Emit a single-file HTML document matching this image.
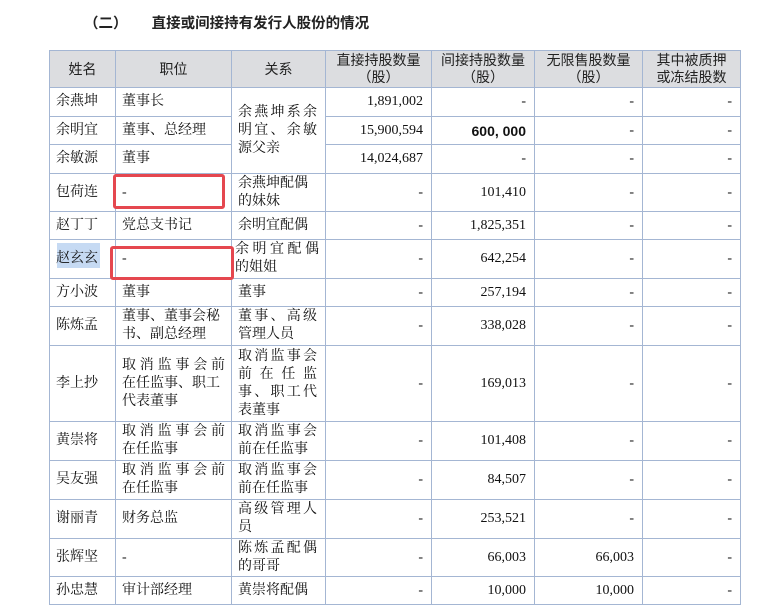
<!DOCTYPE html>
<html><head><meta charset="utf-8"><style>
body{margin:0;width:760px;height:614px;background:#fff;position:relative;overflow:hidden;font-family:"Liberation Serif","Noto Serif CJK SC",serif;color:#111}
.title{position:absolute;top:12px;left:84px;font-size:14.5px;font-family:"Liberation Sans","Noto Sans CJK SC",sans-serif;font-weight:bold;color:#222;white-space:pre}
table{position:absolute;left:49px;top:50px;border-collapse:collapse;table-layout:fixed;font-size:14px}
td{border:1px solid #a4b6d3;padding:0 6px;line-height:18px;vertical-align:middle;overflow:hidden}
th{border:1px solid #a4b6d3;background:#dcdde0;font-weight:normal;font-family:"Liberation Sans","Noto Sans CJK SC",sans-serif;font-size:14px;line-height:17px;color:#222;padding:0}
.n{text-align:right;padding-right:8px}
.j{text-align:justify;text-align-last:justify}
.box{position:absolute;border:3px solid #e5474f;border-radius:3px}
</style></head><body>
<div class="title">（二）      直接或间接持有发行人股份的情况</div>
<div style="position:absolute;left:57px;top:243px;width:43px;height:25px;background:#c6daf3"></div>
<table>
<colgroup><col style="width:66px"><col style="width:116px"><col style="width:94px"><col style="width:106px"><col style="width:103px"><col style="width:108px"><col style="width:98px"></colgroup>
<tr style="height:37px"><th>姓名</th><th>职位</th><th>关系</th><th>直接持股数量<br>（股）</th><th>间接持股数量<br>（股）</th><th>无限售股数量<br>（股）</th><th>其中被质押<br>或冻结股数</th></tr>
<tr style="height:29px"><td>余燕坤</td><td>董事长</td><td rowspan="3" style="padding-right:8px"><div class="j">余燕坤系余</div><div class="j">明宜、余敏</div><div>源父亲</div></td><td class="n">1,891,002</td><td class="n">-</td><td class="n">-</td><td class="n">-</td></tr>
<tr style="height:28px"><td>余明宜</td><td>董事、总经理</td><td class="n">15,900,594</td><td class="n" style="font-family:'Liberation Sans',sans-serif;font-weight:bold">600, 000</td><td class="n">-</td><td class="n">-</td></tr>
<tr style="height:29px"><td>余敏源</td><td>董事</td><td class="n">14,024,687</td><td class="n">-</td><td class="n">-</td><td class="n">-</td></tr>
<tr style="height:38px"><td>包荷连</td><td>-</td><td>余燕坤配偶<br>的妹妹</td><td class="n">-</td><td class="n">101,410</td><td class="n">-</td><td class="n">-</td></tr>
<tr style="height:28px"><td>赵丁丁</td><td>党总支书记</td><td>余明宜配偶</td><td class="n">-</td><td class="n">1,825,351</td><td class="n">-</td><td class="n">-</td></tr>
<tr style="height:39px"><td>赵玄玄</td><td>-</td><td style="padding-left:3px"><div class="j">余明宜配偶</div><div>的姐姐</div></td><td class="n">-</td><td class="n">642,254</td><td class="n">-</td><td class="n">-</td></tr>
<tr style="height:28px"><td>方小波</td><td>董事</td><td>董事</td><td class="n">-</td><td class="n">257,194</td><td class="n">-</td><td class="n">-</td></tr>
<tr style="height:39px"><td>陈炼孟</td><td>董事、董事会秘<br>书、副总经理</td><td style="padding-right:8px"><div class="j">董事、高级</div><div>管理人员</div></td><td class="n">-</td><td class="n">338,028</td><td class="n">-</td><td class="n">-</td></tr>
<tr style="height:76px"><td>李上抄</td><td><div class="j">取消监事会前</div><div>在任监事、职工</div><div>代表董事</div></td><td style="padding-right:8px"><div class="j">取消监事会</div><div class="j">前在任监</div><div class="j">事、职工代</div><div>表董事</div></td><td class="n">-</td><td class="n">169,013</td><td class="n">-</td><td class="n">-</td></tr>
<tr style="height:39px"><td>黄崇将</td><td><div class="j">取消监事会前</div><div>在任监事</div></td><td style="padding-right:8px"><div class="j">取消监事会</div><div>前在任监事</div></td><td class="n">-</td><td class="n">101,408</td><td class="n">-</td><td class="n">-</td></tr>
<tr style="height:39px"><td>吴友强</td><td><div class="j">取消监事会前</div><div>在任监事</div></td><td style="padding-right:8px"><div class="j">取消监事会</div><div>前在任监事</div></td><td class="n">-</td><td class="n">84,507</td><td class="n">-</td><td class="n">-</td></tr>
<tr style="height:39px"><td>谢丽青</td><td>财务总监</td><td style="padding-right:8px"><div class="j">高级管理人</div><div>员</div></td><td class="n">-</td><td class="n">253,521</td><td class="n">-</td><td class="n">-</td></tr>
<tr style="height:38px"><td>张辉坚</td><td>-</td><td style="padding-right:8px"><div class="j">陈炼孟配偶</div><div>的哥哥</div></td><td class="n">-</td><td class="n">66,003</td><td class="n">66,003</td><td class="n">-</td></tr>
<tr style="height:28px"><td>孙忠慧</td><td>审计部经理</td><td>黄崇将配偶</td><td class="n">-</td><td class="n">10,000</td><td class="n">10,000</td><td class="n">-</td></tr>
</table>
<div class="box" style="left:113px;top:174px;width:106px;height:29px"></div>
<div class="box" style="left:110px;top:246px;width:118px;height:28px"></div>
</body></html>
